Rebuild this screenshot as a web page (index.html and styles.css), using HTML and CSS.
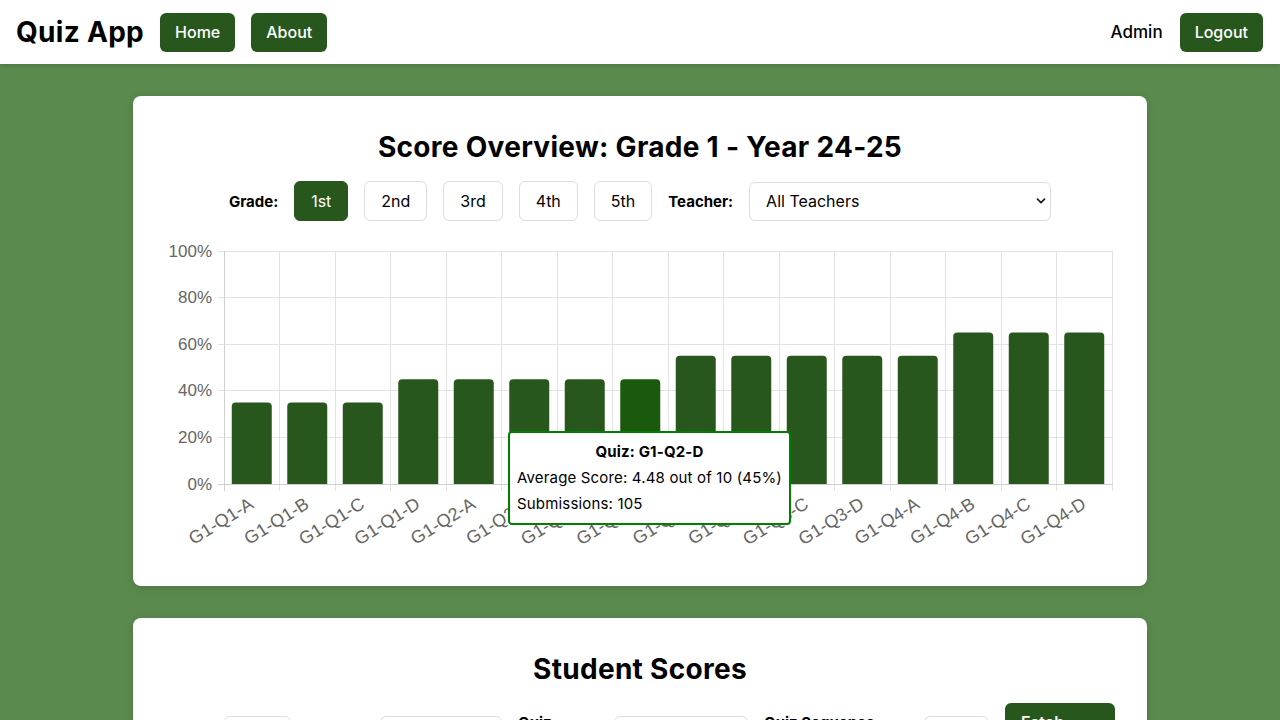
FILE: index.html
```html
<!DOCTYPE html>
<html lang="en">
<head>
<meta charset="utf-8">
<title>Quiz App</title>
<link rel="stylesheet" href="styles.css">
</head>
<body>
<header class="topbar">
  <div class="brand-group">
    <span class="brand">Quiz App</span>
    <a class="btn" href="#">Home</a>
    <a class="btn" href="#">About</a>
  </div>
  <div class="user-group">
    <span class="user">Admin</span>
    <a class="btn" href="#">Logout</a>
  </div>
</header>

<main class="content">
  <section class="card">
    <h2 class="card-title">Score Overview: Grade 1 - Year 24-25</h2>
    <div class="filters">
      <span class="flabel">Grade:</span>
      <button class="gbtn active">1st</button>
      <button class="gbtn">2nd</button>
      <button class="gbtn">3rd</button>
      <button class="gbtn">4th</button>
      <button class="gbtn">5th</button>
      <span class="flabel">Teacher:</span>
      <div class="select">
        <span>All Teachers</span>
        <svg class="chev" width="10" height="8" viewBox="0 0 10 8"><path d="M1.5 2.2 L5 5.6 L8.5 2.2" fill="none" stroke="#222" stroke-width="1.8" stroke-linecap="round" stroke-linejoin="round"/></svg>
      </div>
    </div>

    <div class="chart">
      <svg class="chart-svg" width="950" height="313" viewBox="0 0 950 313">
        <defs>
          <clipPath id="plot"><rect x="0" y="0" width="950" height="243"/></clipPath>
        </defs>
        <g class="grid" stroke="#e3e3e3" stroke-width="1">
          <line x1="53" y1="10.5" x2="947" y2="10.5"/>
          <line x1="53" y1="56.5" x2="947" y2="56.5"/>
          <line x1="53" y1="103.5" x2="947" y2="103.5"/>
          <line x1="53" y1="149.5" x2="947" y2="149.5"/>
          <line x1="53" y1="196.5" x2="947" y2="196.5"/>
          <line x1="114.5" y1="10" x2="114.5" y2="250"/>
          <line x1="170.5" y1="10" x2="170.5" y2="250"/>
          <line x1="225.5" y1="10" x2="225.5" y2="250"/>
          <line x1="281.5" y1="10" x2="281.5" y2="250"/>
          <line x1="336.5" y1="10" x2="336.5" y2="250"/>
          <line x1="392.5" y1="10" x2="392.5" y2="250"/>
          <line x1="447.5" y1="10" x2="447.5" y2="250"/>
          <line x1="503.5" y1="10" x2="503.5" y2="250"/>
          <line x1="558.5" y1="10" x2="558.5" y2="250"/>
          <line x1="614.5" y1="10" x2="614.5" y2="250"/>
          <line x1="669.5" y1="10" x2="669.5" y2="250"/>
          <line x1="725.5" y1="10" x2="725.5" y2="250"/>
          <line x1="780.5" y1="10" x2="780.5" y2="250"/>
          <line x1="836.5" y1="10" x2="836.5" y2="250"/>
          <line x1="891.5" y1="10" x2="891.5" y2="250"/>
          <line x1="947.5" y1="10" x2="947.5" y2="250"/>
        </g>
        <g stroke="#d0d0d0" stroke-width="1">
          <line x1="59.5" y1="10" x2="59.5" y2="250"/>
          <line x1="53" y1="243.5" x2="948" y2="243.5"/>
        </g>
        <g class="bars" clip-path="url(#plot)" fill="#28571e">
          <rect x="66.75" y="161.45" width="40" height="87" rx="4"/>
          <rect x="122.25" y="161.45" width="40" height="87" rx="4"/>
          <rect x="177.75" y="161.45" width="40" height="87" rx="4"/>
          <rect x="233.25" y="138.15" width="40" height="110" rx="4"/>
          <rect x="288.75" y="138.15" width="40" height="110" rx="4"/>
          <rect x="344.25" y="138.15" width="40" height="110" rx="4"/>
          <rect x="399.75" y="138.15" width="40" height="110" rx="4"/>
          <rect x="455.25" y="138.15" width="40" height="110" rx="4" fill="#1b5a0c"/>
          <rect x="510.75" y="114.85" width="40" height="134" rx="4"/>
          <rect x="566.25" y="114.85" width="40" height="134" rx="4"/>
          <rect x="621.75" y="114.85" width="40" height="134" rx="4"/>
          <rect x="677.25" y="114.85" width="40" height="134" rx="4"/>
          <rect x="732.75" y="114.85" width="40" height="134" rx="4"/>
          <rect x="788.25" y="91.55" width="40" height="157" rx="4"/>
          <rect x="843.75" y="91.55" width="40" height="157" rx="4"/>
          <rect x="899.25" y="91.55" width="40" height="157" rx="4"/>
        </g>
        <g class="ylabels">
          <text x="47" y="10">100%</text>
          <text x="47" y="56.6">80%</text>
          <text x="47" y="103.2">60%</text>
          <text x="47" y="149.8">40%</text>
          <text x="47" y="196.4">20%</text>
          <text x="47" y="243">0%</text>
        </g>
        <g class="xlabels">
          <text transform="translate(86.5,261) rotate(-32)">G1-Q1-A</text>
          <text transform="translate(142,261) rotate(-32)">G1-Q1-B</text>
          <text transform="translate(197.5,261) rotate(-32)">G1-Q1-C</text>
          <text transform="translate(253,261) rotate(-32)">G1-Q1-D</text>
          <text transform="translate(308.5,261) rotate(-32)">G1-Q2-A</text>
          <text transform="translate(364,261) rotate(-32)">G1-Q2-B</text>
          <text transform="translate(419.5,261) rotate(-32)">G1-Q2-C</text>
          <text transform="translate(475,261) rotate(-32)">G1-Q2-D</text>
          <text transform="translate(530.5,261) rotate(-32)">G1-Q3-A</text>
          <text transform="translate(586,261) rotate(-32)">G1-Q3-B</text>
          <text transform="translate(641.5,261) rotate(-32)">G1-Q3-C</text>
          <text transform="translate(697,261) rotate(-32)">G1-Q3-D</text>
          <text transform="translate(752.5,261) rotate(-32)">G1-Q4-A</text>
          <text transform="translate(808,261) rotate(-32)">G1-Q4-B</text>
          <text transform="translate(863.5,261) rotate(-32)">G1-Q4-C</text>
          <text transform="translate(919,261) rotate(-32)">G1-Q4-D</text>
        </g>
      </svg>
      <div class="tooltip">
        <div class="tt-title">Quiz: G1-Q2-D</div>
        <div>Average Score: 4.48 out of 10 (45%)</div>
        <div>Submissions: 105</div>
      </div>
    </div>
  </section>

  <section class="card">
    <h2 class="card-title">Student Scores</h2>
    <div class="score-filters">
      <label class="slabel w43">Grade:</label>
      <input class="sinput w67" type="text">
      <label class="slabel w57">Teacher:</label>
      <input class="sinput w122" type="text">
      <label class="slabel w80">Quiz Number:</label>
      <input class="sinput w134" type="text">
      <label class="slabel w144">Quiz Sequence Number:</label>
      <input class="sinput w65" type="text">
      <button class="btn fetch">Fetch Scores</button>
    </div>
  </section>
</main>
</body>
</html>
```

FILE: styles.css
```css
* { box-sizing: border-box; }

body {
  margin: 0;
  background: #5a8a4e;
  font-family: Inter, "Noto Sans", sans-serif;
  color: #000;
}

.topbar {
  height: 64px;
  background: #fff;
  display: flex;
  align-items: center;
  justify-content: space-between;
  padding: 0 17px 0 16px;
  box-shadow: 0 2px 4px rgba(0,0,0,0.12);
}

.brand-group, .user-group {
  display: flex;
  align-items: center;
  gap: 16px;
}

.brand {
  font-size: 28px;
  font-weight: 700;
  letter-spacing: 0.3px;
}

.btn {
  display: inline-block;
  background: #28571e;
  color: #fff;
  text-decoration: none;
  font-family: Inter, sans-serif;
  font-size: 16px;
  font-weight: 500;
  line-height: 19px;
  padding: 10px 15px;
  border-radius: 6px;
  border: none;
}

.user {
  font-size: 17px;
  font-weight: 500;
  margin-right: 1px;
}

.content {
  width: 1014px;
  margin: 0 auto;
  padding: 32px 0;
  display: flex;
  flex-direction: column;
  gap: 32px;
}

.card {
  background: #fff;
  border-radius: 8px;
  padding: 32px;
  box-shadow: 0 2px 8px rgba(0,0,0,0.15);
}

.card-title {
  margin: 0 0 17px;
  text-align: center;
  font-size: 28px;
  line-height: 34px;
  font-weight: 700;
  letter-spacing: 0.3px;
  padding-top: 2px;
}

.filters {
  display: flex;
  justify-content: center;
  align-items: center;
  gap: 16px;
}

.flabel {
  font-size: 15px;
  font-weight: 700;
}

.gbtn {
  font-family: Inter, sans-serif;
  font-size: 16px;
  line-height: 18px;
  height: 40px;
  padding: 0 16px;
  background: #fff;
  color: #000;
  border: 1px solid #ddd;
  border-radius: 6px;
}

.gbtn.active {
  background: #28571e;
  color: #fff;
  border-color: #28571e;
}

.select {
  width: 302px;
  height: 39px;
  border: 1px solid #ddd;
  border-radius: 6px;
  display: flex;
  align-items: center;
  justify-content: space-between;
  padding: 0 4px 0 16px;
  font-size: 16px;
}

.chart {
  position: relative;
  margin-top: 20px;
  height: 313px;
}

.chart-svg { display: block; }

.ylabels text {
  font-family: "Liberation Sans", Arial, sans-serif;
  font-size: 17px;
  fill: #666;
  text-anchor: end;
  dominant-baseline: central;
}

.xlabels text {
  font-family: "Liberation Sans", Arial, sans-serif;
  font-size: 18px;
  fill: #666;
  text-anchor: end;
  dominant-baseline: central;
}

.tooltip {
  position: absolute;
  left: 343px;
  top: 190px;
  background: #fff;
  border: 2px solid #008000;
  border-radius: 4px;
  padding: 6px 7px;
  font-size: 15px;
  line-height: 26px;
  letter-spacing: 0.17px;
  white-space: nowrap;
}

.tt-title {
  text-align: center;
  font-weight: 700;
}

.score-filters {
  display: flex;
  align-items: center;
  gap: 16px;
}

.slabel {
  font-size: 15px;
  font-weight: 700;
  line-height: 18px;
  flex: none;
}

.sinput {
  height: 32px;
  border: 1px solid #ddd;
  border-radius: 6px;
  flex: none;
}

.w43 { width: 43px; }
.w57 { width: 57px; }
.w67 { width: 67px; }
.w80 { width: 80px; }
.w122 { width: 122px; }
.w134 { width: 134px; }
.w144 { width: 144px; }
.w65 { width: 65px; }

.fetch {
  width: 110px;
  flex: none;
  font-weight: 600;
  text-align: left;
  padding: 10px 16px;
}
```
